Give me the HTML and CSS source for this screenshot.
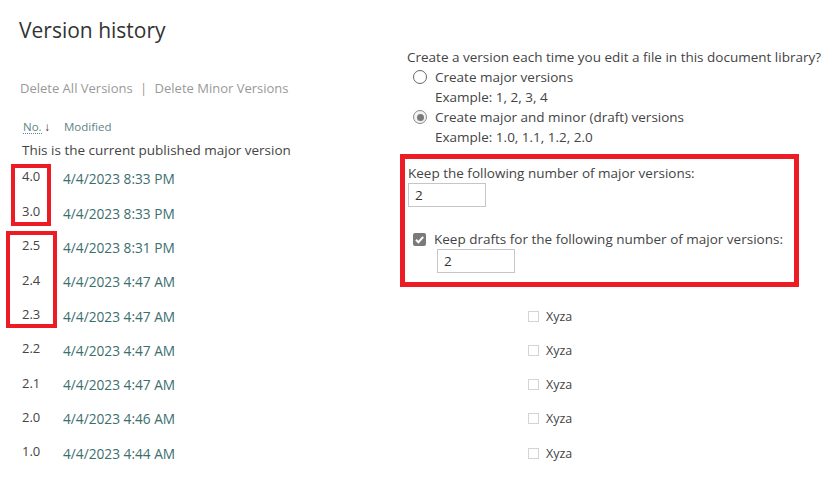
FILE: index.html
```html
<!DOCTYPE html>
<html lang="en">
<head>
    <meta charset="UTF-8">
    <title>Version history</title>
    <link rel="stylesheet" href="styles.css">
</head>
<body>
    <div class="page">
        <h1 class="title">Version history</h1>

        <div class="actions">
            <span>Delete All Versions</span>
            <span class="sep">|</span>
            <span>Delete Minor Versions</span>
        </div>

        <div class="list-head">
            <span class="col-no"><span class="sort-link">No.</span> <span class="arrow">&#8595;</span></span>
            <span class="col-mod">Modified</span>
        </div>

        <div class="intro">This is the current published major version</div>

        <div class="versions">
            <div class="row first">
                <span class="num">4.0</span>
                <span class="date">4/4/2023 8:33 PM</span>
            </div>
            <div class="row">
                <span class="num">3.0</span>
                <span class="date">4/4/2023 8:33 PM</span>
            </div>
            <div class="row">
                <span class="num">2.5</span>
                <span class="date">4/4/2023 8:31 PM</span>
            </div>
            <div class="row">
                <span class="num">2.4</span>
                <span class="date">4/4/2023 4:47 AM</span>
            </div>
            <div class="row">
                <span class="num">2.3</span>
                <span class="date">4/4/2023 4:47 AM</span>
                <span class="who"><span class="box"></span>Xyza</span>
            </div>
            <div class="row">
                <span class="num">2.2</span>
                <span class="date">4/4/2023 4:47 AM</span>
                <span class="who"><span class="box"></span>Xyza</span>
            </div>
            <div class="row">
                <span class="num">2.1</span>
                <span class="date">4/4/2023 4:47 AM</span>
                <span class="who"><span class="box"></span>Xyza</span>
            </div>
            <div class="row">
                <span class="num">2.0</span>
                <span class="date">4/4/2023 4:46 AM</span>
                <span class="who"><span class="box"></span>Xyza</span>
            </div>
            <div class="row">
                <span class="num">1.0</span>
                <span class="date">4/4/2023 4:44 AM</span>
                <span class="who"><span class="box"></span>Xyza</span>
            </div>
        </div>

        <!-- highlight boxes drawn over the version numbers -->
        <div class="mark mark-major"></div>
        <div class="mark mark-minor"></div>

        <!-- versioning settings pasted over the list -->
        <div class="settings">
            <div class="question">Create a version each time you edit a file in this document library?</div>
            <div class="option"><span class="radio"></span>Create major versions</div>
            <div class="example">Example: 1, 2, 3, 4</div>
            <div class="option"><span class="radio checked"></span>Create major and minor (draft) versions</div>
            <div class="example">Example: 1.0, 1.1, 1.2, 2.0</div>

            <div class="limits">
                <div class="limit-label">Keep the following number of major versions:</div>
                <div class="field">2</div>
                <div class="draft-label">
                    <svg class="check" width="13" height="13" viewBox="0 0 13 13">
                        <rect x="0" y="0" width="13" height="13" rx="2" fill="#7a7a7a"/>
                        <path d="M3 6.8 L5.4 9.2 L10.2 3.8" fill="none" stroke="#fff" stroke-width="2"/>
                    </svg>
                    Keep drafts for the following number of major versions:
                </div>
                <div class="field field-draft">2</div>
            </div>
        </div>
    </div>
</body>
</html>
```

FILE: styles.css
```css
body {
    margin: 0;
    padding: 0;
    background-color: #fff;
    font-family: 'Open Sans', 'Noto Sans', sans-serif;
    color: #444;
}

.page {
    position: relative;
    width: 833px;
    height: 492px;
    overflow: hidden;
}

.title {
    margin: 15px 0 0 19px;
    font-size: 21px;
    font-weight: 400;
    line-height: 30px;
    color: #333;
}

.actions {
    margin: 34px 0 0 20px;
    font-size: 13px;
    line-height: 18px;
    color: #999;
}

.actions .sep {
    margin: 0 4px;
}

.list-head {
    display: flex;
    margin: 21px 0 0 23px;
    font-size: 11.5px;
    line-height: 18px;
    color: #5b8585;
}

.col-no {
    width: 41px;
}

.sort-link {
    border-bottom: 1px dotted #5b8585;
    line-height: 12px;
    display: inline-block;
}

.arrow {
    color: #222;
}

.intro {
    margin: 5px 0 0 22px;
    font-size: 13.5px;
    line-height: 19px;
    color: #444;
}

.versions {
    margin-left: 22px;
}

.row {
    display: flex;
    align-items: center;
    height: 34.3px;
}

.row.first {
    height: 36px;
}

.num {
    width: 41px;
    font-size: 13px;
    color: #444;
    padding-bottom: 4px;
}

.date {
    width: 465px;
    font-size: 13.7px;
    color: #3c6e6e;
}

.who {
    display: flex;
    align-items: center;
    font-size: 12.5px;
    color: #444;
}

.box {
    width: 9px;
    height: 9px;
    border: 1px solid #d4d4d4;
    margin-right: 7px;
}

/* red highlight rectangles */
.mark {
    position: absolute;
    border: 4px solid #ed1c24;
}

.mark-major {
    left: 11px;
    top: 164px;
    width: 32px;
    height: 54px;
}

.mark-minor {
    left: 6px;
    top: 231px;
    width: 43px;
    height: 89px;
}

/* settings panel */
.settings {
    position: absolute;
    left: 400px;
    top: 47px;
    width: 433px;
    font-size: 13.5px;
    line-height: 20px;
    color: #444;
}

.question {
    padding-left: 7px;
}

.option {
    display: flex;
    align-items: center;
    padding-left: 13px;
}

.radio {
    width: 12px;
    height: 12px;
    border: 1px solid #666;
    border-radius: 50%;
    margin-right: 8px;
    position: relative;
}

.radio.checked {
    border-color: #8a8a8a;
    background: #f2f2f2;
}

.radio.checked::after {
    content: '';
    position: absolute;
    left: 2.5px;
    top: 2.5px;
    width: 7px;
    height: 7px;
    border-radius: 50%;
    background: #7a7a7a;
}

.example {
    padding-left: 35px;
}

.limits {
    margin-top: 7px;
    width: 386px;
    height: 119px;
    border: 5px solid #ed1c24;
    padding: 4px 0 0 3px;
    box-sizing: content-box;
}

.field {
    width: 70px;
    height: 22px;
    border: 1px solid #c6c6c6;
    padding-left: 6px;
    line-height: 22px;
    font-size: 13.5px;
    color: #333;
}

.draft-label {
    display: flex;
    align-items: center;
    margin-top: 22px;
    padding-left: 5px;
}

.check {
    margin-right: 8px;
}

.field-draft {
    margin-left: 29px;
}
```
